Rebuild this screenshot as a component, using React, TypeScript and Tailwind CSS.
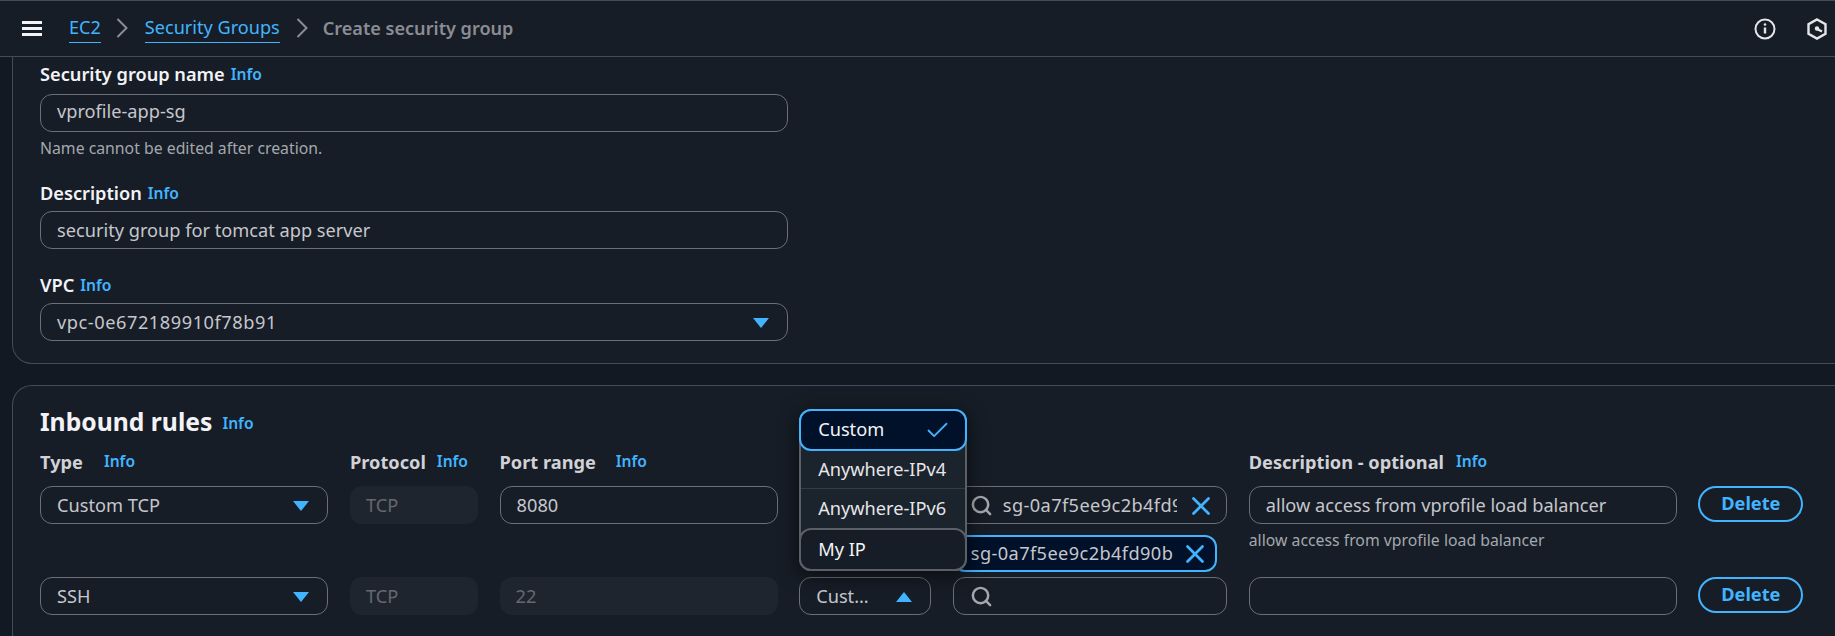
import { Check, Search, X } from "lucide-react";

const Info = ({ className = "" }: { className?: string }) => (
  <span className={`text-[15.6px] font-semibold text-[#42b4ff] ${className}`}>Info</span>
);

const Caret = ({ up = false }: { up?: boolean }) => (
  <svg width="16" height="12" viewBox="0 0 16 12" className="shrink-0">
    <polygon points={up ? "8,1 16,11 0,11" : "0,1 16,1 8,11"} fill="#42b4ff" />
  </svg>
);

const Chevron = () => (
  <svg width="12" height="22" viewBox="0 0 12 22" fill="none" stroke="#8c8c94" strokeWidth="2">
    <path d="M1.500 2l9 9-9 9" />
  </svg>
);

function Field({ children, className = "" }: { children?: React.ReactNode; className?: string }) {
  return (
    <div
      className={`flex h-[38px] items-center rounded-[12px] border border-[#6b6f76] bg-[#161d26] px-[16px] pt-[1px] text-[18.2px] text-[#c6c6cd] ${className}`}
    >
      {children}
    </div>
  );
}

function Disabled({ children }: { children: React.ReactNode }) {
  return (
    <div className="flex h-[38px] items-center rounded-[12px] bg-[#1f252e] px-[16px] pt-[1px] text-[18.2px] text-[#656871]">
      {children}
    </div>
  );
}

function Select({ children }: { children: React.ReactNode }) {
  return (
    <Field className="justify-between pr-[18px]">
      <span>{children}</span>
      <Caret />
    </Field>
  );
}

function Label({ children }: { children: React.ReactNode }) {
  return <span className="pt-[1px] text-[18.2px] font-bold text-[#d1d1d6]">{children}</span>;
}

function FormLabel({ text, className = "mb-[5px]" }: { text: string; className?: string }) {
  return (
    <div className={`flex h-[24px] items-center gap-[6px] text-[18.2px] font-semibold text-[#f3f3f7] ${className}`}>
      {text} <Info />
    </div>
  );
}

function DeleteButton() {
  return (
    <button className="h-[36px] rounded-full border-2 border-[#42b4ff] text-[18.2px] font-bold text-[#42b4ff]">
      Delete
    </button>
  );
}

function SourceMenu() {
  return (
    <div className="absolute bottom-[44px] left-0 z-10 w-[168px] rounded-[12px] border-2 border-[#5b5f66] bg-[#1b232d] text-[18.2px] text-[#e6e6ea] shadow-[0_4px_20px_rgba(0,0,0,0.6)]">
      <div className="-mx-[2px] -mt-[2px] flex h-[42px] items-center justify-between rounded-[12px] border-2 border-[#42b4ff] bg-[#001129] pl-[17px] pr-[14px] text-[#f3f3f7]">
        Custom
        <Check size={27} strokeWidth={1.6} color="#42b4ff" />
      </div>
      <div className="flex h-[38px] items-center border-b border-[#333b45] pl-[17px]">Anywhere-IPv4</div>
      <div className="flex h-[39px] items-center pl-[17px]">Anywhere-IPv6</div>
      <div className="-mx-[2px] -mb-[2px] flex h-[43px] items-center rounded-[12px] border-2 border-[#5b5f66] bg-[#161d26] pl-[17px] text-[#f3f3f7]">
        My IP
      </div>
    </div>
  );
}

export default function App() {
  return (
    <div
      className="h-[636px] w-[1835px] overflow-hidden bg-[#131922]"
      style={{ fontFamily: '"Noto Sans", sans-serif' }}
    >
      <header className="flex h-[57px] items-center justify-between border-y border-y-[#414d5c] bg-[#161d26] pl-[22px] pr-[8px]">
        <div className="flex items-center text-[18.1px]">
          <svg width="20" height="16" viewBox="0 0 20 16" fill="#f3f3f7">
            <rect y="1" width="20" height="3" />
            <rect y="7" width="20" height="3" />
            <rect y="13" width="20" height="3" />
          </svg>
          <a className="ml-[27px] border-b border-[#42b4ff] text-[#42b4ff]">EC2</a>
          <span className="ml-[15px] mr-[17px]"><Chevron /></span>
          <a className="border-b border-[#42b4ff] text-[#42b4ff]">Security Groups</a>
          <span className="ml-[16px] mr-[15px]"><Chevron /></span>
          <span className="font-semibold text-[#8c8c94]">Create security group</span>
        </div>
        <div className="flex items-center gap-[31px]">
          <svg width="22" height="22" viewBox="0 0 22 22" fill="none" stroke="#e6e6ea" strokeWidth="2">
            <circle cx="11" cy="11" r="9.5" />
            <path d="M11 9.5v6" strokeWidth="2.4" />
            <circle cx="11" cy="6.5" r="1.3" fill="#e6e6ea" stroke="none" />
          </svg>
          <svg width="20" height="22" viewBox="0 0 20 22" fill="none" stroke="#e6e6ea" strokeWidth="2.4">
            <path d="M10 1.500l8.500 4.800v9.400L10 20.500l-8.500-4.800V6.300z" />
            <path d="M10 11l5 2.500" />
            <circle cx="10" cy="10.500" r="2.200" fill="#e6e6ea" stroke="none" />
          </svg>
        </div>
      </header>

      <section className="-mr-[30px] ml-[12px] h-[307px] rounded-b-[20px] border border-t-0 border-[#414d5c] bg-[#161d26] pl-[27px] pt-[6px]">
        <div className="w-[748px]">
          <FormLabel text="Security group name" className="mb-[7px]" />
          <Field className="h-[37px] pt-0! pb-[2px]">vprofile-app-sg</Field>
          <p className="mt-[6px] h-[20px] text-[15.8px] leading-[20px] text-[#a4a8ae]">Name cannot be edited after creation.</p>
          <div className="mt-[24px]">
            <FormLabel text="Description" />
            <Field>security group for tomcat app server</Field>
          </div>
          <div className="mt-[25px]">
            <FormLabel text="VPC" />
            <Select><span className="tracking-[0.55px]">vpc-0e672189910f78b91</span></Select>
          </div>
        </div>
      </section>

      <section className="-mr-[30px] ml-[12px] mt-[21px] h-[300px] rounded-t-[20px] border border-b-0 border-[#414d5c] bg-[#161d26] pl-[27px] pt-[18px]">
        <div className="flex h-[36px] items-center gap-[10px]">
          <h2 className="text-[24.7px] font-bold text-[#f3f3f7]">Inbound rules</h2>
          <Info className="mt-[4px]" />
        </div>

        <div className="mt-[10px] grid w-[1763px] grid-cols-[288.4px_128px_278px_132px_274.4px_428px_105px] gap-x-[21.6px]">
          <div className="flex h-[24px] items-center gap-[21px]"><Label>Type</Label><Info /></div>
          <div className="flex h-[24px] items-center gap-[11px]"><Label>Protocol</Label><Info /></div>
          <div className="flex h-[24px] items-center gap-[20px]"><Label>Port range</Label><Info /></div>
          <div />
          <div />
          <div className="flex h-[24px] items-center gap-[12px]"><Label>Description - optional</Label><Info /></div>
          <div />

          <div className="mt-[12px] h-[91px]"><Select>Custom TCP</Select></div>
          <div className="mt-[12px]"><Disabled>TCP</Disabled></div>
          <div className="mt-[12px]"><Field>8080</Field></div>
          <div className="mt-[12px]" />
          <div className="mt-[12px]">
            <Field className="pl-[16px] pr-[10px]">
              <Search size={23} color="#a4a8ae" strokeWidth={2.6} className="shrink-0" />
              <span className="ml-[10px] w-[174px] overflow-hidden whitespace-nowrap tracking-[0.4px]">sg-0a7f5ee9c2b4fd90b</span>
              <X size={30} color="#42b4ff" strokeWidth={2.2} className="ml-auto shrink-0" />
            </Field>
            <div className="mt-[11px] flex h-[37px] w-[264px] items-center justify-between rounded-[12px] border-2 border-[#42b4ff] bg-[#001129] pl-[16px] pr-[5px] text-[18.2px] tracking-[0.4px] text-[#c6c6cd]">
              sg-0a7f5ee9c2b4fd90b
              <X size={30} color="#42b4ff" strokeWidth={2.2} />
            </div>
          </div>
          <div className="mt-[12px]">
            <Field>allow access from vprofile load balancer</Field>
            <p className="mt-[5px] text-[15.8px] text-[#a4a8ae]">allow access from vprofile load balancer</p>
          </div>
          <div className="mt-[12px]"><div className="flex flex-col"><DeleteButton /></div></div>

          <Select>SSH</Select>
          <Disabled>TCP</Disabled>
          <Disabled>22</Disabled>
          <div className="relative">
            <SourceMenu />
            <Field className="justify-between pr-[18px]">
              <span>Cust…</span>
              <Caret up />
            </Field>
          </div>
          <Field className="pl-[16px]">
            <Search size={23} color="#a4a8ae" strokeWidth={2.6} />
          </Field>
          <Field />
          <DeleteButton />
        </div>
      </section>
    </div>
  );
}
